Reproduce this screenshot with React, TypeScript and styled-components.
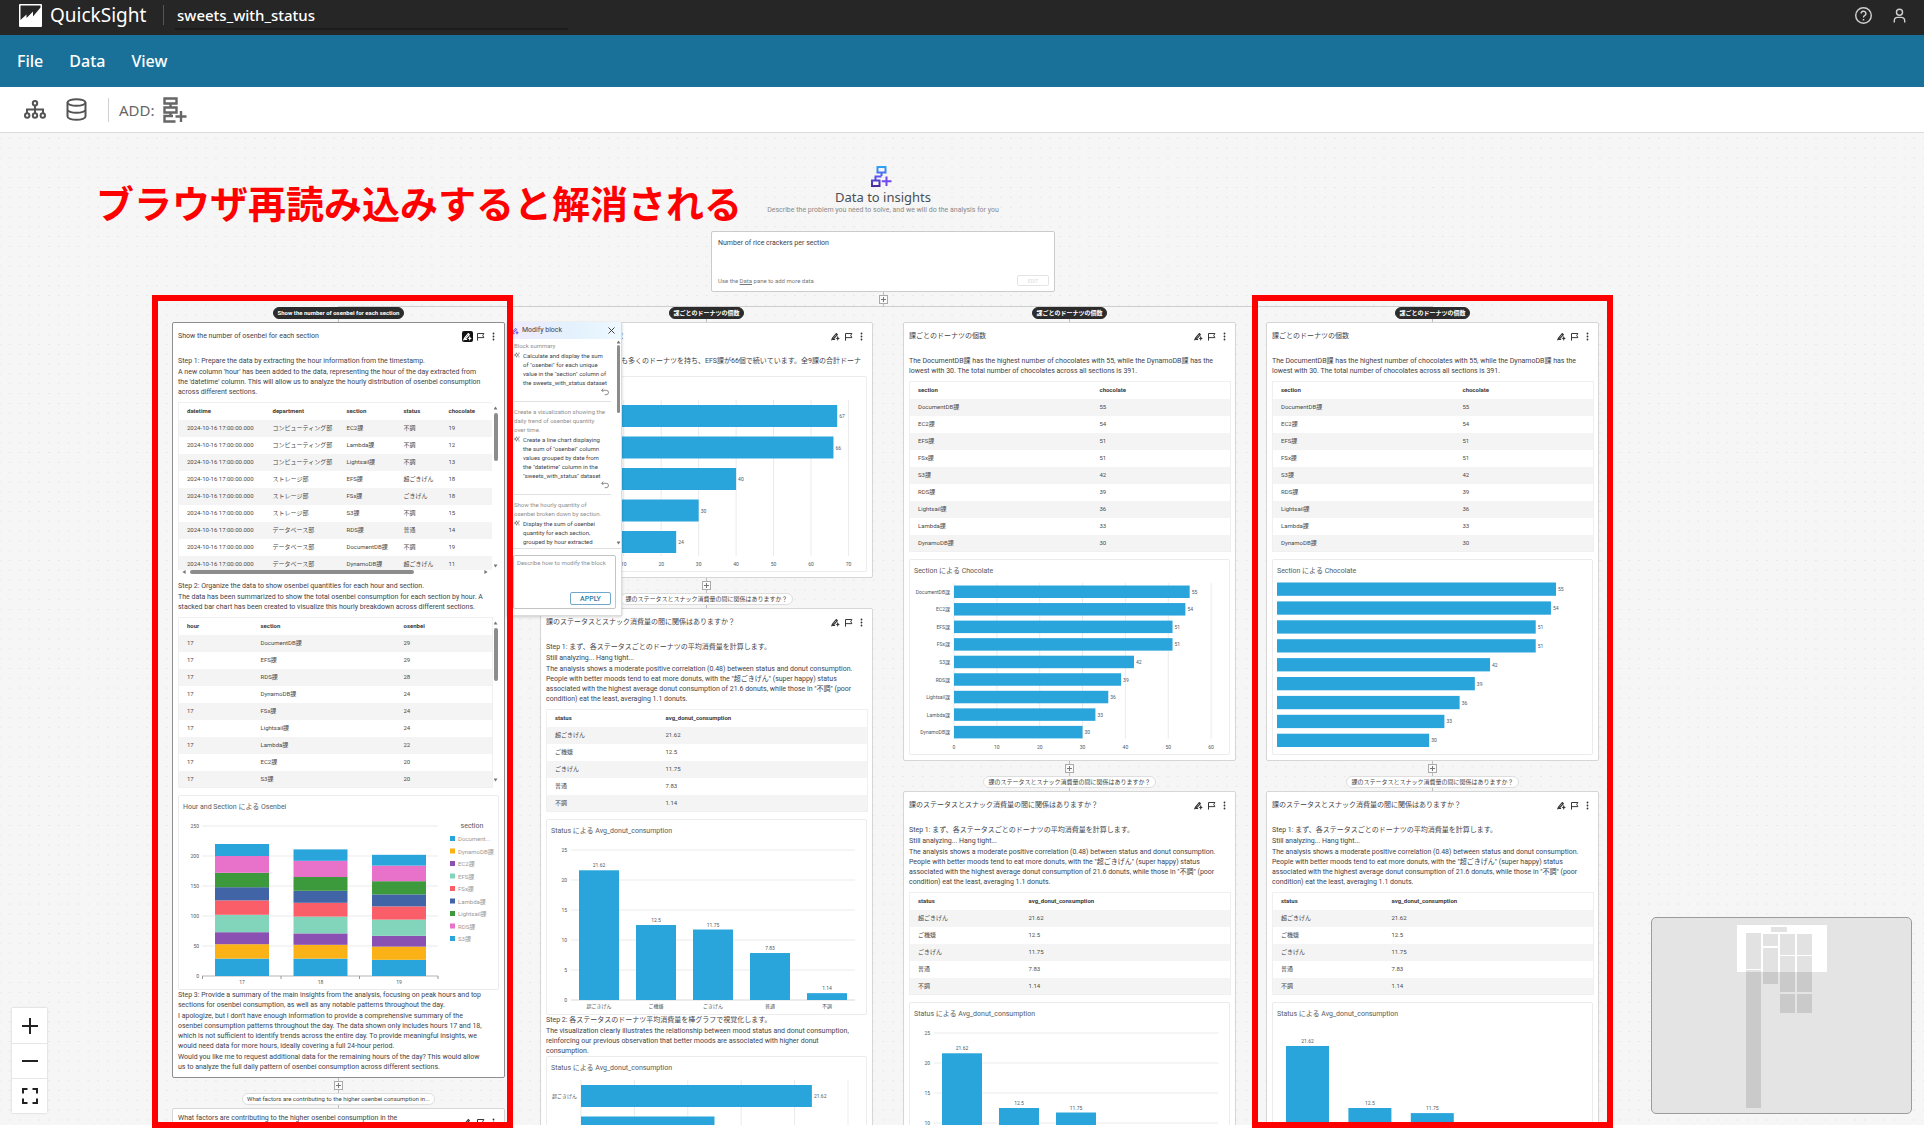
import React from "react";
import styled, { createGlobalStyle, css } from "styled-components";

/* ---------- theme ---------- */

const UI_FONT = `"Noto Sans", "Noto Sans CJK JP", sans-serif`;
const SMALL_FONT = `Roboto, "Noto Sans CJK JP", sans-serif`;
const BLUE = "#2aa5dc";
const ZOOM = 0.4908;

const GlobalStyle = createGlobalStyle`
  * { box-sizing: border-box; }
  body { margin: 0; background: #fff; font-family: ${UI_FONT}; }
  button, textarea, input { font: inherit; color: inherit; }
  h1, h2, h3, p { margin: 0; font-weight: 400; }
`;

/* ---------- page chrome ---------- */

const Page = styled.div`
  position: relative;
  display: flex;
  flex-direction: column;
  height: 100vh;
  padding-bottom: 3px;
  overflow: hidden;
`;

const TopBar = styled.header`
  display: flex;
  flex: none;
  align-items: center;
  height: 35px;
  padding: 0 16px 5px 19px;
  background: #262626;
  color: #fff;
`;

const Brand = styled.a`
  display: flex;
  align-items: center;
  gap: 8px;
  width: 145px;
  height: 20px;
  border-right: 1px solid #555;
  color: #fff;
  font-size: 19px;
  line-height: 20px;
  text-decoration: none;
`;

const DocTitle = styled.h1`
  flex: none;
  width: 393px;
  height: 29px;
  margin-left: 11px;
  padding-left: 2px;
  border-bottom: 2px solid #1c1c1c;
  font-size: 15px;
  font-weight: 500;
  line-height: 28px;
`;

const TopActions = styled.div`
  display: flex;
  gap: 18px;
  margin-left: auto;
`;

const IconButton = styled.button`
  display: grid;
  place-items: center;
  padding: 0;
  border: 0;
  background: none;
`;

const MenuBar = styled.nav`
  display: flex;
  flex: none;
  align-items: center;
  gap: 26px;
  height: 52px;
  padding: 0 17px;
  background: #19719a;
`;

const MenuItem = styled.button`
  padding: 0;
  border: 0;
  background: none;
  color: #fff;
  font-size: 16px;
  font-weight: 500;
  line-height: 20px;
`;

const Toolbar = styled.div`
  display: flex;
  flex: none;
  align-items: center;
  height: 46px;
  padding: 0 24px;
  border-bottom: 1px solid #dcdcdc;
  background: #fff;
  color: #545454;
`;

const ToolGroup = styled.div`
  display: flex;
  align-items: center;
  gap: 20px;
  height: 24px;
  padding-right: 21px;
  border-right: 1px solid #d0d0d0;
`;

const AddGroup = styled.div`
  display: flex;
  align-items: center;
  gap: 8px;
  padding-left: 10px;
  color: #666;
  font-size: 15px;
`;

/* ---------- canvas ---------- */

const Canvas = styled.main`
  position: relative;
  flex: 1;
  overflow: hidden;
  background: #f6f6f6;
  color: #3f444a;
  font-family: ${SMALL_FONT};
  font-size: 7px;
  line-height: 10px;
`;

const DotGrid = styled.svg`
  position: absolute;
  inset: 0;
  width: 100%;
  height: 100%;
`;

const Node = styled.div<{ $x: number; $y: number; $w: number }>`
  position: absolute;
  left: ${(p) => p.$x}px;
  top: ${(p) => p.$y}px;
  display: flex;
  flex-direction: column;
  align-items: center;
  width: ${(p) => p.$w}px;
`;

const Rail = styled.div`
  position: absolute;
  left: 338px;
  top: 173px;
  width: 1095px;
  border-top: 1px solid #cfcfcf;
`;

const Stem = styled.span`
  width: 1px;
  height: 3px;
  background: #bdbdbd;
`;

const PlusBox = styled.button`
  display: grid;
  place-items: center;
  width: 9px;
  height: 9px;
  padding: 0;
  border: 1px solid #aaa;
  background: #fafafa;
  color: #777;
`;

const Pill = styled.span<{ $dark?: boolean }>`
  height: 12px;
  padding: 0 4px;
  border: 1px solid ${(p) => (p.$dark ? "#2c2c2c" : "#dedede")};
  border-radius: 6px;
  background: ${(p) => (p.$dark ? "#2c2c2c" : "#fff")};
  color: ${(p) => (p.$dark ? "#fff" : "#444")};
  font-size: 6px;
  font-weight: ${(p) => (p.$dark ? 700 : 400)};
  line-height: 10px;
  white-space: nowrap;
`;

const PromptTitle = styled.h2`
  margin-top: 2px;
  color: #4a4f55;
  font-family: ${UI_FONT};
  font-size: 13px;
  line-height: 16px;
`;

const PromptHint = styled.p`
  color: #8a8a8a;
`;

const PromptCard = styled.section`
  display: flex;
  flex-direction: column;
  justify-content: space-between;
  width: 100%;
  height: 61px;
  margin-top: 16px;
  padding: 6px 5px 5px 6px;
  border: 1px solid #cbcbcb;
  border-radius: 2px;
  background: #fff;
`;

const PromptFooter = styled.div`
  display: flex;
  align-items: center;
  justify-content: space-between;
  color: #777;
  font-size: 6px;
  a { color: inherit; }
`;

const EditButton = styled.button`
  width: 32px;
  height: 11px;
  padding: 0;
  border: 1px solid #e4e4e4;
  border-radius: 2px;
  background: #fff;
  color: #dcdcdc;
  font-size: 5px;
  line-height: 8px;
`;

/* ---------- block card ---------- */

const Card = styled.article<{ $selected?: boolean }>`
  width: 100%;
  padding: 0 5px 5px;
  border: 1px solid ${(p) => (p.$selected ? "#8f8f8f" : "#d6d6d6")};
  border-radius: 2px;
  background: #fff;
`;

const CardHead = styled.header`
  display: flex;
  align-items: center;
  justify-content: space-between;
  height: 27px;
  margin-bottom: 6px;
`;

const CardTitle = styled.h3`
  max-width: 240px;
  font-size: 7px;
  line-height: 9px;
`;

const CardTools = styled.div`
  display: flex;
  gap: 2px;
`;

const ToolButton = styled(IconButton)<{ $active?: boolean }>`
  width: 11px;
  height: 11px;
  border-radius: 2px;
  ${(p) =>
    p.$active
      ? css`
          background: #111;
          color: #fff;
        `
      : css`
          color: #333;
        `}
`;

const Prose = styled.div`
  display: flex;
  flex-direction: column;
  gap: 1px;
`;

const TableFrame = styled.div<{ $height?: number }>`
  display: flex;
  height: ${(p) => (p.$height ? `${p.$height}px` : "auto")};
  margin: 5px 0 7px;
`;

const TableColumn = styled.div`
  display: flex;
  flex: 1;
  flex-direction: column;
  min-width: 0;
`;

const TableView = styled.div`
  flex: 1;
  overflow: hidden;
`;

const Table = styled.table<{ $stretch?: boolean }>`
  width: 100%;
  height: ${(p) => (p.$stretch ? "100%" : "auto")};
  border: 1px solid #f0f0f0;
  border-collapse: collapse;
  table-layout: fixed;
  color: #4a4a4a;
  font-size: 6px;
  line-height: 10px;
  th, td {
    height: 17px;
    padding: 0 0 0 8px;
    text-align: left;
    white-space: nowrap;
  }
  th { color: #3a3a3a; font-weight: 700; }
  tbody tr:nth-child(odd) { background: #f4f4f4; }
`;

const VRail = styled.div`
  display: flex;
  flex: none;
  flex-direction: column;
  align-items: center;
  gap: 3px;
  width: 7px;
  padding: 4px 0 6px;
`;

const HRail = styled.div`
  display: flex;
  align-items: center;
  gap: 4px;
  height: 4px;
  padding: 0 4px;
`;

const Thumb = styled.span<{ $w: number; $h: number }>`
  width: ${(p) => p.$w}px;
  height: ${(p) => p.$h}px;
  border-radius: 2px;
  background: #8c8c8c;
`;

const Arrow = styled.span<{ $dir: "up" | "down" | "left" | "right" }>`
  width: 4px;
  height: 4px;
  background: #777;
  clip-path: ${(p) =>
    ({
      up: "polygon(50% 10%, 100% 90%, 0 90%)",
      down: "polygon(0 10%, 100% 10%, 50% 90%)",
      left: "polygon(90% 0, 90% 100%, 10% 50%)",
      right: "polygon(10% 0, 90% 50%, 10% 100%)",
    })[p.$dir]};
  ${(p) => (p.$dir === "down" ? "margin-top: auto;" : "")}
  ${(p) => (p.$dir === "right" ? "margin-left: auto;" : "")}
`;

const ChartCard = styled.figure<{ $height: number }>`
  height: ${(p) => p.$height}px;
  margin: 0;
  border: 1px solid #ececec;
  border-radius: 2px;
  overflow: hidden;
  svg { display: block; }
`;

const ChartTitle = styled.figcaption`
  padding: 6px 4px;
  color: #555b61;
`;

/* ---------- modify panel ---------- */

const Panel = styled.aside`
  position: absolute;
  left: 507px;
  top: 189px;
  display: flex;
  flex-direction: column;
  width: 115px;
  height: 294px;
  border: 1px solid #dcdcdc;
  border-top: 0;
  background: #fff;
  box-shadow: 0 1px 3px rgba(0, 0, 0, 0.18);
  font-size: 6px;
  line-height: 9px;
`;

const PanelHead = styled.header`
  display: flex;
  flex: none;
  align-items: center;
  gap: 3px;
  height: 17px;
  padding: 0 6px 0 3px;
  background: linear-gradient(90deg, #efeaff, #e3f2fd 60%, #eef8ff);
  font-size: 7px;
  button { margin-left: auto; }
`;

const PanelScroll = styled.div`
  display: flex;
  flex: 1;
  min-height: 0;
  border-bottom: 1px solid #e0e0e0;
`;

const PanelList = styled.div`
  flex: 1;
  padding: 2px 0 0 6px;
  overflow: hidden;
`;

const Entry = styled.section`
  display: flex;
  flex-direction: column;
  width: 97px;
  margin-bottom: 5px;
  padding-bottom: 5px;
  border-bottom: 1px solid #e2e2e2;
  > button { align-self: flex-end; margin: 1px 2px 0 0; }
`;

const EntryAsk = styled.p`
  color: #8f8f8f;
  white-space: nowrap;
`;

const EntryText = styled.div`
  display: flex;
  gap: 3px;
  margin-top: 1px;
  color: #3f444a;
  white-space: nowrap;
  svg { flex: none; margin-top: 1px; }
`;

const PanelForm = styled.form`
  display: flex;
  flex: none;
  flex-direction: column;
  height: 54px;
  margin: 6px 5px;
  border: 1px solid #c4c4c4;
  border-radius: 2px;
`;

const PromptInput = styled.textarea`
  flex: 1;
  width: 100%;
  padding: 2px 3px;
  border: 0;
  background: none;
  outline: 0;
  resize: none;
  overflow: hidden;
  line-height: 9px;
  &::placeholder { color: #8f8f8f; opacity: 1; }
`;

const ApplyButton = styled.button`
  align-self: flex-end;
  width: 41px;
  height: 13px;
  margin: 0 4px 3px;
  padding: 0;
  border: 1px solid #6fa8c9;
  border-radius: 2px;
  background: #fff;
  color: #2678a5;
  font-size: 7px;
  font-weight: 500;
  line-height: 10px;
`;

/* ---------- overlays ---------- */

const ZoomControls = styled.div`
  position: absolute;
  left: 12px;
  bottom: 12px;
  display: grid;
  grid-auto-rows: 35px;
  width: 35px;
  background: #fff;
  box-shadow: 0 0 2px rgba(0, 0, 0, 0.2);
  button + button { border-top: 1px solid #e6e6e6; }
`;

const MiniMap = styled.svg`
  position: absolute;
  right: 12px;
  bottom: 11px;
  border: 1px solid #9c9c9c;
  border-radius: 5px;
  background: #e4e4e4;
`;

const Highlight = styled.div<{ $x: number }>`
  position: absolute;
  left: ${(p) => p.$x}px;
  top: 295px;
  bottom: 0;
  width: 361px;
  border: 6px solid #ff0000;
  pointer-events: none;
`;

const Callout = styled.p`
  position: absolute;
  left: 96px;
  top: 174px;
  color: #ff0000;
  font-family: "Noto Sans CJK JP", sans-serif;
  font-size: 38px;
  font-weight: 700;
  line-height: 56px;
  white-space: nowrap;
`;

/* ---------- icons ---------- */

const ModifyIcon = ({ size = 9, color = "currentColor" }) => (
  <svg width={size} height={size} viewBox="0 0 24 24" fill="none" stroke={color} strokeWidth="3">
    <path d="M2 21l3-6L14 4l3 3L8 17zM5 20h6" strokeLinejoin="round" />
    <path d="M18 10l2 5.500 4 1.500-4 1.500-2 5.500-2-5.500-4-1.500 4-1.500z" fill={color} stroke="none" />
  </svg>
);

const FlagIcon = () => (
  <svg width="9" height="9" viewBox="0 0 24 24" fill="none" stroke="currentColor" strokeWidth="2.600">
    <path d="M4 23V4h17l-3 5 3 6H4" />
  </svg>
);

const KebabIcon = () => (
  <svg width="9" height="9" viewBox="0 0 24 24" fill="currentColor">
    <circle cx="12" cy="4" r="2.400" />
    <circle cx="12" cy="12" r="2.400" />
    <circle cx="12" cy="20" r="2.400" />
  </svg>
);

const PlusGlyph = () => (
  <svg width="5" height="5" viewBox="0 0 5 5" stroke="currentColor">
    <path d="M2.500 0v5M0 2.500h5" />
  </svg>
);

const SparkIcon = () => (
  <svg width="6" height="6" viewBox="0 0 24 24" fill="none" stroke="#555" strokeWidth="2.500">
    <path d="M10 3l2.500 6.500L19 12l-6.500 2.500L10 21l-2.500-6.500L1 12l6.500-2.500zM20 2v6M20 17v5" />
  </svg>
);

const UndoIcon = () => (
  <svg width="8" height="8" viewBox="0 0 24 24" fill="none" stroke="#555" strokeWidth="2">
    <path d="M7 2L2 7l5 5M2 7h14a6 6 0 010 13h-5" />
  </svg>
);

const LogoIcon = () => (
  <svg width="23" height="23" viewBox="0 0 23 23">
    <rect width="23" height="23" rx="1" fill="#fff" />
    <path d="M1.500 1.500h20v2L14 12.500V7.500L7.500 14v-3.500L1.500 16z" fill="#262626" />
  </svg>
);

const HelpIcon = () => (
  <svg width="19" height="19" viewBox="0 0 20 20" fill="none" stroke="#d0d0d0" strokeWidth="1.500">
    <circle cx="10" cy="10" r="8.200" />
    <path d="M7.500 8a2.500 2.500 0 113.600 2.200c-.8.400-1.100.8-1.100 1.600v.4M10 13.700v1.500" />
  </svg>
);

const UserIcon = () => (
  <svg width="17" height="17" viewBox="0 0 18 18" fill="none" stroke="#d0d0d0" strokeWidth="1.500">
    <circle cx="9" cy="5.500" r="3.200" />
    <path d="M3.500 16.500v-2a3.500 3.500 0 013.500-3.500h4a3.500 3.500 0 013.500 3.500v2" />
  </svg>
);

const TreeIcon = () => (
  <svg width="22" height="19" viewBox="0 0 22 19" fill="none" stroke="currentColor" strokeWidth="2">
    <circle cx="11" cy="3.200" r="2.200" />
    <circle cx="3.200" cy="15.500" r="2.200" />
    <circle cx="11" cy="15.500" r="2.200" />
    <circle cx="18.800" cy="15.500" r="2.200" />
    <path d="M11 5.500v7.800M3 13.300V9.500h16v3.800" />
  </svg>
);

const DatabaseIcon = () => (
  <svg width="21" height="23" viewBox="0 0 21 23" fill="none" stroke="currentColor" strokeWidth="2">
    <ellipse cx="10.500" cy="4.500" rx="9" ry="3.300" />
    <path d="M1.500 4.500v14c0 1.800 4 3.300 9 3.300s9-1.500 9-3.300v-14M1.500 11.500c0 1.800 4 3.300 9 3.300s9-1.500 9-3.300" />
  </svg>
);

const AddBlockIcon = () => (
  <svg width="24" height="26" viewBox="0 0 24 26" fill="none" stroke="currentColor" strokeWidth="2.400">
    <path d="M1.500 1.500h12v5h-12zM7.500 6.500v4M1.500 10.500h12v5h-12zM7.500 15.500v3.500M10 19H1.500v5.500h11M18 14v11M12.500 19.500h11" />
  </svg>
);

const InsightIcon = () => (
  <svg width="24" height="21" viewBox="0 0 24 21" fill="none" strokeWidth="2">
    <defs>
      <linearGradient id="insight" x1="0" y1="0" x2="0" y2="21" gradientUnits="userSpaceOnUse">
        <stop offset="0" stopColor="#27a9f5" />
        <stop offset="0.500" stopColor="#5a55f0" />
        <stop offset="1" stopColor="#4b2599" />
      </linearGradient>
    </defs>
    <path
      stroke="url(#insight)"
      d="M6.500 1h8v5.500h-8zM10.500 6.500v3.500M4.500 14v-3.500h6M1 14.500h7.500V20H1z"
    />
    <path stroke="#6f48f0" d="M15.500 10.500V20M10.800 15.300h9.700" />
  </svg>
);

/* ---------- charts ---------- */

const Label = styled.text<{ $muted?: boolean }>`
  fill: ${(p) => (p.$muted ? "#9a9a9a" : "#4d5a66")};
  font-family: ${SMALL_FONT};
  font-size: 5px;
  dominant-baseline: central;
`;

const LegendLabel = styled(Label)`
  font-size: 6px;
`;

const LegendTitle = styled(Label)`
  font-size: 7px;
`;

type Datum = { name: string; value: number };

type HBarProps = {
  title: string;
  data: Datum[];
  zero: number;
  unit: number;
  first: number;
  pitch: number;
  thick: number;
  ticks?: number[];
  names?: boolean;
};

const HBarChart = ({ title, data, zero, unit, first, pitch, thick, ticks = [], names = true }: HBarProps) => (
  <ChartCard $height={196}>
    <ChartTitle>{title}</ChartTitle>
    <svg width="319" height="172">
      {ticks.map((t) => (
        <g key={t}>
          <line x1={zero + t * unit} x2={zero + t * unit} y1="1" y2="157" stroke="#ebebeb" />
          <Label x={zero + t * unit} y="165" textAnchor="middle">{t}</Label>
        </g>
      ))}
      {data.map((d, i) => {
        const y = first + i * pitch;
        return (
          <g key={d.name}>
            <rect x={zero} y={y} width={d.value * unit} height={thick} fill={BLUE} />
            {names && <Label x={zero - 4} y={y + thick / 2} textAnchor="end">{d.name}</Label>}
            <Label x={zero + d.value * unit + 2} y={y + thick / 2}>{d.value}</Label>
          </g>
        );
      })}
    </svg>
  </ChartCard>
);

type VBarProps = {
  title: string;
  data: Datum[];
  zero: number;
  unit: number;
  first: number;
  pitch: number;
  thick: number;
  axis?: boolean;
};

const VBarChart = ({ title, data, zero, unit, first, pitch, thick, axis = true }: VBarProps) => (
  <ChartCard $height={196}>
    <ChartTitle>{title}</ChartTitle>
    <svg width="319" height="172">
      {axis &&
        [0, 5, 10, 15, 20, 25].map((t) => (
          <g key={t}>
            <line x1="24" x2="308" y1={zero - t * unit} y2={zero - t * unit} stroke={t ? "#ebebeb" : "#d8d8d8"} />
            <Label x="20" y={zero - t * unit} textAnchor="end">{t}</Label>
          </g>
        ))}
      {data.map((d, i) => {
        const x = first + i * pitch;
        return (
          <g key={d.name}>
            <rect x={x} y={zero - d.value * unit} width={thick} height={d.value * unit} fill={BLUE} />
            <Label x={x + thick / 2} y={zero - d.value * unit - 5} textAnchor="middle">{d.value}</Label>
            {axis && <Label x={x + thick / 2} y={zero + 6} textAnchor="middle">{d.name}</Label>}
          </g>
        );
      })}
    </svg>
  </ChartCard>
);

const SERIES = [
  { name: "DocumentDB課", label: "Document...", color: BLUE },
  { name: "DynamoDB課", label: "DynamoDB課", color: "#fbb216" },
  { name: "EC2課", label: "EC2課", color: "#8a50b2" },
  { name: "EFS課", label: "EFS課", color: "#82d5bb" },
  { name: "FSx課", label: "FSx課", color: "#fa5f69" },
  { name: "Lambda課", label: "Lambda課", color: "#4164a6" },
  { name: "Lightsail課", label: "Lightsail課", color: "#3c9a3d" },
  { name: "RDS課", label: "RDS課", color: "#e871c9" },
  { name: "S3課", label: "S3課", color: BLUE },
];

const STACKS = [
  { hour: 17, values: [29, 24, 20, 29, 24, 22, 24, 28, 20] },
  { hour: 18, values: [29, 23, 19, 28, 23, 20, 23, 27, 19] },
  { hour: 19, values: [27, 22, 18, 27, 22, 20, 22, 26, 18] },
];

const StackedChart = () => (
  <ChartCard $height={195}>
    <ChartTitle>Hour and Section による Osenbei</ChartTitle>
    <svg width="319" height="170">
      {[0, 50, 100, 150, 200, 250].map((t) => (
        <g key={t}>
          <line x1="23" x2="259" y1={158 - t * 0.6} y2={158 - t * 0.6} stroke={t ? "#ebebeb" : "#b5b5b5"} />
          <Label x="20" y={158 - t * 0.6} textAnchor="end">{t}</Label>
        </g>
      ))}
      {[0, 1, 2, 3].map((i) => (
        <line key={i} x1={23.5 + i * 78.5} x2={23.5 + i * 78.5} y1="158" y2="161" stroke="#999" />
      ))}
      {STACKS.map((stack, i) => {
        let sum = 0;
        const x = 36 + i * 78.5;
        return (
          <g key={stack.hour}>
            {stack.values.map((v, j) => {
              sum += v;
              return (
                <rect key={j} x={x} y={158 - sum * 0.6} width="54" height={v * 0.6} fill={SERIES[j].color} />
              );
            })}
            <Label x={x + 27} y="164" textAnchor="middle">{stack.hour}</Label>
          </g>
        );
      })}
      <LegendTitle x="293" y="8" textAnchor="middle">section</LegendTitle>
      {SERIES.map((s, i) => (
        <g key={s.name}>
          <rect x="271" y={18 + i * 12.5} width="5" height="5" fill={s.color} />
          <LegendLabel x="279" y={20.5 + i * 12.5} $muted>{s.label}</LegendLabel>
        </g>
      ))}
    </svg>
  </ChartCard>
);

/* ---------- data ---------- */

const STEP_ROWS = [
  ["コンピューティング部", "EC2課", "不調", "19"],
  ["コンピューティング部", "Lambda課", "不調", "12"],
  ["コンピューティング部", "Lightsail課", "不調", "13"],
  ["ストレージ部", "EFS課", "超ごきげん", "18"],
  ["ストレージ部", "FSx課", "ごきげん", "18"],
  ["ストレージ部", "S3課", "不調", "15"],
  ["データベース部", "RDS課", "普通", "14"],
  ["データベース部", "DocumentDB課", "不調", "19"],
  ["データベース部", "DynamoDB課", "超ごきげん", "11"],
].map((r) => ["2024-10-16 17:00:00.000", ...r]);

const HOUR_ROWS = [
  ["DocumentDB課", "29"],
  ["EFS課", "29"],
  ["RDS課", "28"],
  ["DynamoDB課", "24"],
  ["FSx課", "24"],
  ["Lightsail課", "24"],
  ["Lambda課", "22"],
  ["EC2課", "20"],
  ["S3課", "20"],
].map((r) => ["17", ...r]);

const CHOCOLATE: Datum[] = [
  { name: "DocumentDB課", value: 55 },
  { name: "EC2課", value: 54 },
  { name: "EFS課", value: 51 },
  { name: "FSx課", value: 51 },
  { name: "S3課", value: 42 },
  { name: "RDS課", value: 39 },
  { name: "Lightsail課", value: 36 },
  { name: "Lambda課", value: 33 },
  { name: "DynamoDB課", value: 30 },
];

const DONUTS: Datum[] = [
  { name: "Lambda課", value: 67 },
  { name: "EFS課", value: 66 },
  { name: "EC2課", value: 40 },
  { name: "S3課", value: 30 },
  { name: "RDS課", value: 24 },
];

const MOODS: Datum[] = [
  { name: "超ごきげん", value: 21.62 },
  { name: "ご機嫌", value: 12.5 },
  { name: "ごきげん", value: 11.75 },
  { name: "普通", value: 7.83 },
  { name: "不調", value: 1.14 },
];

const toRows = (data: Datum[]) => data.map((d) => [d.name, String(d.value)]);

/* ---------- building blocks ---------- */

type GridProps = { head: string[]; rows: string[][]; widths: number[]; stretch?: boolean };

const DataTable = ({ head, rows, widths, stretch }: GridProps) => (
  <Table $stretch={stretch}>
    <colgroup>
      {head.map((h, i) => (
        <col key={h} width={widths[i]} />
      ))}
    </colgroup>
    <thead>
      <tr>{head.map((h) => <th key={h} scope="col">{h}</th>)}</tr>
    </thead>
    <tbody>
      {rows.map((r, i) => (
        <tr key={i}>{r.map((c, j) => <td key={j}>{c}</td>)}</tr>
      ))}
    </tbody>
  </Table>
);

const VScroll = ({ thumb }: { thumb: number }) => (
  <VRail>
    <Arrow $dir="up" />
    <Thumb $w={4} $h={thumb} />
    <Arrow $dir="down" />
  </VRail>
);

type BlockProps = { title: string; selected?: boolean; children?: React.ReactNode };

const Block = ({ title, selected, children }: BlockProps) => (
  <Card $selected={selected}>
    <CardHead>
      <CardTitle>{title}</CardTitle>
      <CardTools>
        <ToolButton aria-label="Modify block" $active={selected}><ModifyIcon /></ToolButton>
        <ToolButton aria-label="Flag block"><FlagIcon /></ToolButton>
        <ToolButton aria-label="More options"><KebabIcon /></ToolButton>
      </CardTools>
    </CardHead>
    {children}
  </Card>
);

const AddStep = () => (
  <>
    <Stem />
    <PlusBox aria-label="Add block"><PlusGlyph /></PlusBox>
    <Stem />
  </>
);

const Connector = ({ label }: { label: string }) => (
  <>
    <AddStep />
    <Pill>{label}</Pill>
    <Stem />
  </>
);

const Column = ({ x, label, children }: { x: number; label: string; children: React.ReactNode }) => (
  <Node $x={x} $y={174} $w={333}>
    <Pill $dark>{label}</Pill>
    <Stem />
    {children}
  </Node>
);

const PER_SECTION = "課ごとのドーナツの個数";
const MOOD_QUESTION = "課のステータスとスナック消費量の間に関係はありますか？";

const MoodBlock = ({ chart, children }: { chart: React.ReactNode; children?: React.ReactNode }) => (
  <Block title={MOOD_QUESTION}>
    <Prose>
      <p>Step 1: まず、各ステータスごとのドーナツの平均消費量を計算します。</p>
      <p>Still analyzing... Hang tight...</p>
      <p>
        The analysis shows a moderate positive correlation (0.48) between status and donut consumption.
        <br />
        People with better moods tend to eat more donuts, with the "超ごきげん" (super happy) status
        <br />
        associated with the highest average donut consumption of 21.6 donuts, while those in "不調" (poor
        <br />
        condition) eat the least, averaging 1.1 donuts.
      </p>
    </Prose>
    <TableFrame>
      <DataTable head={["status", "avg_donut_consumption"]} rows={toRows(MOODS)} widths={[111, 210]} />
    </TableFrame>
    {chart}
    {children}
  </Block>
);

const ChocolateBlock = ({ chart }: { chart: React.ReactNode }) => (
  <Block title={PER_SECTION}>
    <Prose>
      <p>
        The DocumentDB課 has the highest number of chocolates with 55, while the DynamoDB課 has the
        <br />
        lowest with 30. The total number of chocolates across all sections is 391.
      </p>
    </Prose>
    <TableFrame $height={171}>
      <DataTable head={["section", "chocolate"]} rows={toRows(CHOCOLATE)} widths={[182, 139]} stretch />
    </TableFrame>
    {chart}
  </Block>
);

const MOOD_TITLE = "Status による Avg_donut_consumption";
const moodColumns = <VBarChart title={MOOD_TITLE} data={MOODS} zero={158} unit={6} first={32} pitch={57} thick={40} />;
const moodColumnsBare = (
  <VBarChart title={MOOD_TITLE} data={MOODS} zero={168} unit={6.8} first={13} pitch={62.4} thick={43} axis={false} />
);

const SlimRail = styled(VRail)`
  gap: 1px;
  width: 5px;
  padding: 1px 0 3px;
`;

const ModifyPanel = () => (
  <Panel aria-label="Modify block">
    <PanelHead>
      <ModifyIcon size={8} color="#6a45e8" />
      <span>Modify block</span>
      <IconButton aria-label="Close">
        <svg width="7" height="7" viewBox="0 0 7 7" stroke="#444"><path d="M.5.5l6 6M6.500.5l-6 6" /></svg>
      </IconButton>
    </PanelHead>
    <PanelScroll>
      <PanelList>
        <Entry>
          <EntryAsk>Block summary</EntryAsk>
          <EntryText>
            <SparkIcon />
            <p>
              Calculate and display the sum<br />of "osenbei" for each unique<br />value in the "section" column of
              <br />the sweets_with_status dataset
            </p>
          </EntryText>
          <IconButton aria-label="Revert"><UndoIcon /></IconButton>
        </Entry>
        <Entry>
          <EntryAsk>Create a visualization showing the<br />daily trend of osenbei quantity<br />over time.</EntryAsk>
          <EntryText>
            <SparkIcon />
            <p>
              Create a line chart displaying<br />the sum of "osenbei" column<br />values grouped by date from
              <br />the "datetime" column in the<br />"sweets_with_status" dataset
            </p>
          </EntryText>
          <IconButton aria-label="Revert"><UndoIcon /></IconButton>
        </Entry>
        <Entry>
          <EntryAsk>Show the hourly quantity of<br />osenbei broken down by section.</EntryAsk>
          <EntryText>
            <SparkIcon />
            <p>Display the sum of osenbei<br />quantity for each section,<br />grouped by hour extracted</p>
          </EntryText>
        </Entry>
      </PanelList>
      <SlimRail>
        <Arrow $dir="up" />
        <Thumb $w={3} $h={68} />
        <Arrow $dir="down" />
      </SlimRail>
    </PanelScroll>
    <PanelForm onSubmit={(e) => e.preventDefault()}>
      <PromptInput aria-label="Describe how to modify the block" placeholder="Describe how to modify the block" />
      <ApplyButton>APPLY</ApplyButton>
    </PanelForm>
  </Panel>
);

const MAP_NODES = [
  [94, 15, 15, 36], [94, 52, 15, 138], [119, 9, 16, 5],
  [111, 16, 15, 12], [111, 30, 15, 36],
  [128, 16, 15, 21], [128, 38, 15, 36], [128, 76, 15, 19],
  [145, 16, 15, 21], [145, 38, 15, 36], [145, 76, 15, 19],
];

const Overview = () => (
  <MiniMap width="261" height="197" viewBox="0 0 259 195" role="img" aria-label="Canvas overview">
    <rect x="85" y="7" width="90" height="47" fill="#fff" />
    {MAP_NODES.map(([x, y, w, h], i) => (
      <rect key={i} x={x} y={y} width={w} height={h} fill="#000" fillOpacity="0.115" />
    ))}
  </MiniMap>
);

/* ---------- app ---------- */

export default function App() {
  return (
    <Page>
      <GlobalStyle />
      <TopBar>
        <Brand href="#home"><LogoIcon />QuickSight</Brand>
        <DocTitle>sweets_with_status</DocTitle>
        <TopActions>
          <IconButton aria-label="Help"><HelpIcon /></IconButton>
          <IconButton aria-label="Account"><UserIcon /></IconButton>
        </TopActions>
      </TopBar>
      <MenuBar>
        <MenuItem>File</MenuItem>
        <MenuItem>Data</MenuItem>
        <MenuItem>View</MenuItem>
      </MenuBar>
      <Toolbar>
        <ToolGroup>
          <IconButton aria-label="Outline"><TreeIcon /></IconButton>
          <IconButton aria-label="Datasets"><DatabaseIcon /></IconButton>
        </ToolGroup>
        <AddGroup>
          ADD:
          <IconButton aria-label="Add block"><AddBlockIcon /></IconButton>
        </AddGroup>
      </Toolbar>

      <Canvas>
        <DotGrid aria-hidden="true">
          <pattern id="dots" width="20" height="20" patternUnits="userSpaceOnUse" patternTransform={`translate(-5 0) scale(${ZOOM})`}>
            <circle cx="10" cy="11" r="1.200" fill="#d4d4d4" />
          </pattern>
          <rect width="100%" height="100%" fill="url(#dots)" />
        </DotGrid>
        <Rail />

        <Node $x={711} $y={33} $w={344}>
          <InsightIcon />
          <PromptTitle>Data to insights</PromptTitle>
          <PromptHint>Describe the problem you need to solve, and we will do the analysis for you</PromptHint>
          <PromptCard>
            <p>Number of rice crackers per section</p>
            <PromptFooter>
              <span>Use the <a href="#data">Data</a> pane to add more data</span>
              <EditButton disabled>EDIT</EditButton>
            </PromptFooter>
          </PromptCard>
          <AddStep />
        </Node>

        <Column x={172} label="Show the number of osenbei for each section">
          <Block title="Show the number of osenbei for each section" selected>
            <Prose>
              <p>Step 1: Prepare the data by extracting the hour information from the timestamp.</p>
              <p>
                A new column 'hour' has been added to the data, representing the hour of the day extracted from
                <br />
                the 'datetime' column. This will allow us to analyze the hourly distribution of osenbei consumption
                <br />
                across different sections.
              </p>
            </Prose>
            <TableFrame $height={172}>
              <TableColumn>
                <TableView>
                  <DataTable
                    head={["datetime", "department", "section", "status", "chocolate"]}
                    rows={STEP_ROWS}
                    widths={[86, 74, 57, 45, 52]}
                  />
                </TableView>
                <HRail>
                  <Arrow $dir="left" />
                  <Thumb $w={224} $h={4} />
                  <Arrow $dir="right" />
                </HRail>
              </TableColumn>
              <VScroll thumb={48} />
            </TableFrame>
            <Prose>
              <p>Step 2: Organize the data to show osenbei quantities for each hour and section.</p>
              <p>
                The data has been summarized to show the total osenbei consumption for each section by hour. A
                <br />
                stacked bar chart has been created to visualize this hourly breakdown across different sections.
              </p>
            </Prose>
            <TableFrame $height={171}>
              <TableColumn>
                <DataTable head={["hour", "section", "osenbei"]} rows={HOUR_ROWS} widths={[74, 143, 97]} stretch />
              </TableColumn>
              <VScroll thumb={53} />
            </TableFrame>
            <StackedChart />
            <Prose>
              <p>
                Step 3: Provide a summary of the main insights from the analysis, focusing on peak hours and top
                <br />
                sections for osenbei consumption, as well as any notable patterns throughout the day.
              </p>
              <p>
                I apologize, but I don't have enough information to provide a comprehensive summary of the
                <br />
                osenbei consumption patterns throughout the day. The data shown only includes hours 17 and 18,
                <br />
                which is not sufficient to identify trends across the entire day. To provide meaningful insights, we
                <br />
                would need data for more hours, ideally covering a full 24-hour period.
              </p>
              <p>
                Would you like me to request additional data for the remaining hours of the day? This would allow
                <br />
                us to analyze the full daily pattern of osenbei consumption across different sections.
              </p>
            </Prose>
          </Block>
          <Connector label="What factors are contributing to the higher osenbei consumption in..." />
          <Block title="What factors are contributing to the higher osenbei consumption in the afternoon?" />
        </Column>

        <Column x={540} label={PER_SECTION}>
          <Block title={PER_SECTION}>
            <Prose>
              <p>
                Lambda課が67個で、最も多くのドーナツを持ち、EFS課が66個で続いています。全9課の合計ドーナツ数は330個です。
              </p>
            </Prose>
            <HBarChart
              title="Section による Donut"
              data={DONUTS}
              zero={39.3}
              unit={3.745}
              first={6}
              pitch={31.5}
              thick={22}
              ticks={[0, 10, 20, 30, 40, 50, 60, 70]}
            />
          </Block>
          <Connector label={MOOD_QUESTION} />
          <MoodBlock chart={moodColumns}>
            <Prose>
              <p>Step 2: 各ステータスのドーナツ平均消費量を棒グラフで視覚化します。</p>
              <p>
                The visualization clearly illustrates the relationship between mood status and donut consumption,
                <br />
                reinforcing our previous observation that better moods are associated with higher donut
                <br />
                consumption.
              </p>
            </Prose>
            <HBarChart
              title={MOOD_TITLE}
              data={MOODS}
              zero={34}
              unit={10.68}
              first={6}
              pitch={31.5}
              thick={22}
              ticks={[0, 5, 10, 15, 20, 25]}
            />
          </MoodBlock>
        </Column>

        <Column x={903} label={PER_SECTION}>
          <ChocolateBlock
            chart={
              <HBarChart
                title="Section による Chocolate"
                data={CHOCOLATE}
                zero={44}
                unit={4.285}
                first={3.5}
                pitch={17.55}
                thick={12.5}
                ticks={[0, 10, 20, 30, 40, 50, 60]}
              />
            }
          />
          <Connector label={MOOD_QUESTION} />
          <MoodBlock chart={moodColumns} />
        </Column>

        <Column x={1266} label={PER_SECTION}>
          <ChocolateBlock
            chart={
              <HBarChart
                title="Section による Chocolate"
                data={CHOCOLATE}
                zero={4}
                unit={5.073}
                first={0.5}
                pitch={18.9}
                thick={13.3}
                names={false}
              />
            }
          />
          <Connector label={MOOD_QUESTION} />
          <MoodBlock chart={moodColumnsBare} />
        </Column>

        <ModifyPanel />

        <ZoomControls>
          <IconButton aria-label="Zoom in">
            <svg width="16" height="16" viewBox="0 0 16 16" stroke="#222" strokeWidth="2"><path d="M8 0v16M0 8h16" /></svg>
          </IconButton>
          <IconButton aria-label="Zoom out">
            <svg width="16" height="16" viewBox="0 0 16 16" stroke="#222" strokeWidth="2"><path d="M0 8h16" /></svg>
          </IconButton>
          <IconButton aria-label="Fit to screen">
            <svg width="16" height="16" viewBox="0 0 16 16" fill="none" stroke="#222" strokeWidth="2">
              <path d="M1 5.500V1h4.500M10.500 1H15v4.500M15 10.500V15h-4.500M5.500 15H1v-4.500" />
            </svg>
          </IconButton>
        </ZoomControls>
        <Overview />
      </Canvas>

      <Highlight $x={152} />
      <Highlight $x={1252} />
      <Callout>ブラウザ再読み込みすると解消される</Callout>
    </Page>
  );
}
